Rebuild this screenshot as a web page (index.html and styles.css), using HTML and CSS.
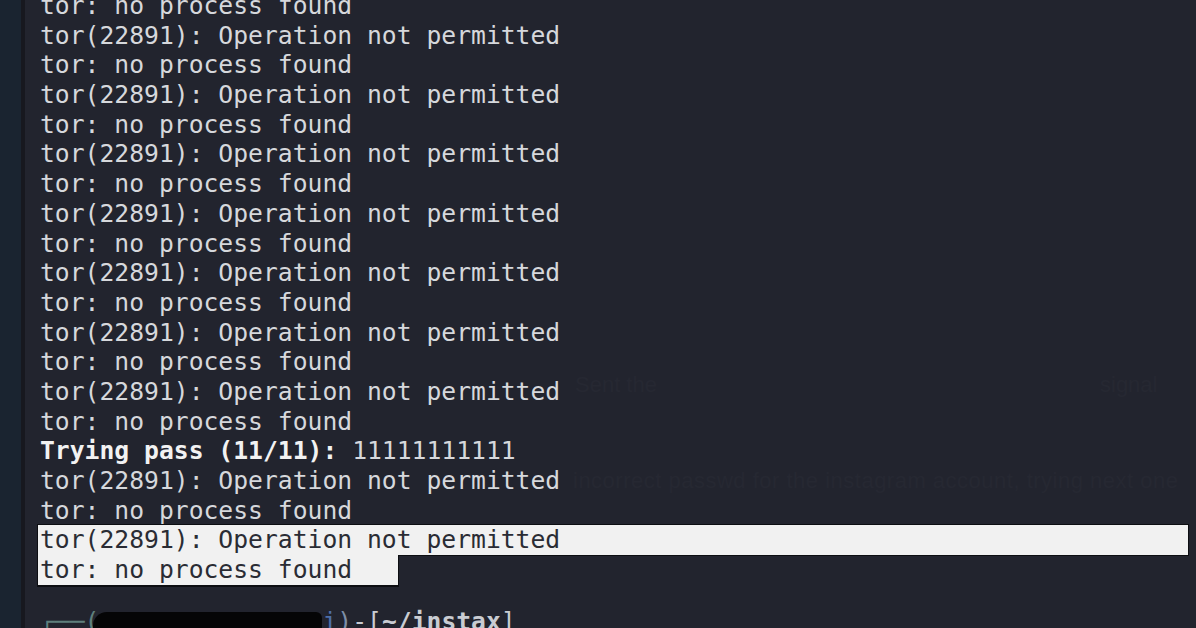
FILE: index.html
```html
<!DOCTYPE html>
<html>
<head>
<meta charset="utf-8">
<link rel="stylesheet" href="styles.css">
</head>
<body>
<div class="window">
  <div class="side"></div>
  <div class="divider"></div>
  <div class="term">
    <div class="ghost ghost-a">Sent the</div>
    <div class="ghost ghost-c">signal</div>
    <div class="ghost ghost-b">incorrect passwd for the instagram account, trying next one</div>
    <div class="lines">
      <div class="line">tor: no process found</div>
      <div class="line">tor(22891): Operation not permitted</div>
      <div class="line">tor: no process found</div>
      <div class="line">tor(22891): Operation not permitted</div>
      <div class="line">tor: no process found</div>
      <div class="line">tor(22891): Operation not permitted</div>
      <div class="line">tor: no process found</div>
      <div class="line">tor(22891): Operation not permitted</div>
      <div class="line">tor: no process found</div>
      <div class="line">tor(22891): Operation not permitted</div>
      <div class="line">tor: no process found</div>
      <div class="line">tor(22891): Operation not permitted</div>
      <div class="line">tor: no process found</div>
      <div class="line">tor(22891): Operation not permitted</div>
      <div class="line">tor: no process found</div>
      <div class="line"><b class="bold">Trying pass (11/11):</b> 11111111111</div>
      <div class="line">tor(22891): Operation not permitted</div>
      <div class="line">tor: no process found</div>
      <div class="line sel-full">tor(22891): Operation not permitted</div>
      <div class="line"><span class="sel-part">tor: no process found</span></div>
      <div class="line"></div>
      <div class="line prompt"><span class="p-box">┌──(</span><span class="redact"></span><span class="p-at">i</span><span class="p-paren">)</span><span class="p-dash">-[</span><span class="p-dir">~/instax</span><span class="p-dash">]</span></div>
    </div>
  </div>
</div>
</body>
</html>
```
FILE: styles.css
```css
html, body {
  margin: 0;
  padding: 0;
  background: #22242e;
  overflow: hidden;
}
.window {
  display: flex;
  width: 1196px;
  height: 628px;
  overflow: hidden;
}
.side {
  width: 21px;
  flex: none;
  background: #1a2430;
}
.divider {
  width: 4px;
  flex: none;
  background: #17181f;
}
.term {
  position: relative;
  flex: 1;
  background: #22242e;
  padding-left: 15px;
  overflow: hidden;
}
.lines {
  margin-top: -9px;
  font-family: "DejaVu Sans Mono", "Liberation Mono", monospace;
  font-size: 24.7px;
  color: #d6d8dc;
}
.line {
  height: 29.7px;
  line-height: 29.7px;
  white-space: pre;
}
.bold {
  font-weight: bold;
  color: #f2f2f2;
}
.sel-full {
  background: #f1f1f1;
  color: #2a2c34;
  margin-left: -2px;
  padding-left: 2px;
  width: 1148px;
  box-shadow: 0 0 0 1px #0d0e12;
}
.sel-part {
  display: inline-block;
  background: #f1f1f1;
  color: #2a2c34;
  margin-left: -2px;
  padding-left: 2px;
  width: 358px;
  height: 29.7px;
  box-shadow: 0 1px 0 1px #0d0e12;
}
.prompt {
  margin-top: -7px;
}
.p-box { color: #5f7f7c; }
.p-at { color: #4d6fa8; }
.p-paren { color: #7e8fa8; }
.p-dash { color: #c9ccd2; }
.p-dir { color: #c9ccd2; font-weight: bold; }
.redact {
  display: inline-block;
  margin-left: -6px;
  width: 229px;
  height: 26px;
  vertical-align: -8px;
  background: #050506;
  border-radius: 14px 6px 0 0;
}
.ghost {
  position: absolute;
  font-family: "Liberation Sans", sans-serif;
  color: #262832;
  white-space: pre;
  font-size: 22px;
}
.ghost-a {
  top: 372px;
  left: 550px;
}
.ghost-c {
  top: 372px;
  left: 1075px;
}
.ghost-b {
  top: 468px;
  left: 548px;
  letter-spacing: 0.5px;
}
```
